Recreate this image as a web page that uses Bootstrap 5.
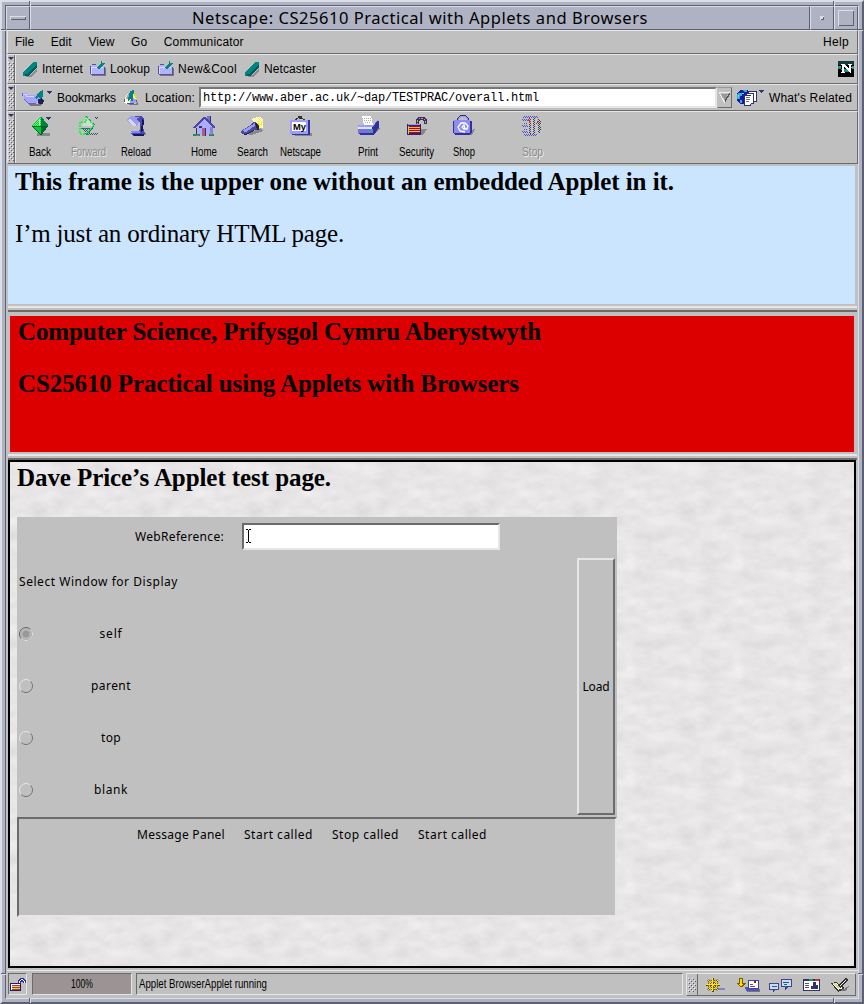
<!DOCTYPE html>
<html lang="en">
<head>
<meta charset="utf-8">
<title>Netscape: CS25610 Practical with Applets and Browsers</title>
<link href="https://cdn.jsdelivr.net/npm/bootstrap@5.3.0/dist/css/bootstrap.min.css" rel="stylesheet">
<style>
:root{--face:#c0c0c0;--hi:#e6e6e6;--lo:#6b6b6b;--frame:#aeb2c3;--fhi:#dcdee5;--flo:#5d6070}
*{border-radius:0!important}
body{margin:0;background:var(--frame);color:#000;font:12px/14px "Liberation Sans",Arial,sans-serif;width:864px;height:1004px;overflow:hidden}
[data-w]{display:inline-block;white-space:pre;flex:none}
.win{height:1004px;border:2px solid;border-color:var(--fhi) var(--flo) var(--flo) var(--fhi);padding:3px 3px 3px 3px}
.win-in{height:994px;width:854px;border:1px solid;border-color:var(--flo) var(--fhi) var(--fhi) var(--flo);background:var(--face);padding-left:1px}
.tick{position:absolute;background:var(--flo)}
.tick.v{width:2px;height:5px;border-right:1px solid var(--fhi)}
.tick.h{height:2px;width:5px;border-bottom:1px solid var(--fhi)}
.titlebar{height:24px;background:var(--frame);margin-left:-1px}
.tb{border:1px solid;border-color:var(--fhi) var(--flo) var(--flo) var(--fhi)}
.tb-side{width:24px}
.ttl{font:16.5px/21px "Noto Sans","Open Sans",sans-serif}
.bar{border:1px solid;border-color:var(--hi) var(--lo) var(--lo) var(--hi)}
.menu-row{height:24px;padding:0 8px 0 7px}
.menu-row .items{gap:16.7px}
.grip{width:7px;flex:none;border-right:1px solid var(--lo);padding:2px 0 2px 0}
.grip::before{content:"";display:block;border:3px solid transparent;border-top:3px solid #30306c;border-bottom:0;width:6px}
.grip::after,.dots{content:"";display:block;flex:1;margin-top:2px;background:url("data:image/svg+xml,%3Csvg xmlns='http://www.w3.org/2000/svg' width='4' height='4' shape-rendering='crispEdges'%3E%3Cpath d='M0 0h1v1H0zM2 2h1v1H2z' fill='%23eee'/%3E%3Cpath d='M1 1h1v1H1zM3 3h1v1H3z' fill='%2355557a'/%3E%3C/svg%3E")}
.tool{border-left:1px solid var(--hi);flex:1;min-width:0}
svg{display:block;flex:none;shape-rendering:crispEdges;overflow:visible}
.lbl{font:12.5px/14px "Liberation Sans",Arial,sans-serif}
.lbl[data-w],.lbl [data-w]{transform-origin:0 50%;text-align:left}
.url{width:518px;height:21px;margin-left:4px;background:#fff;border:2px solid;border-color:#777 var(--hi) var(--hi) #777;font:12px/18px "Liberation Mono",monospace;padding-left:2px}
.drop{width:15px;height:21px;border:1px solid;border-color:#999 var(--lo) var(--lo) var(--face)}
.navbtn{width:48px;padding-top:4px}
.navbtn svg{margin-bottom:5px}
.off{color:#8a8a8a;text-shadow:1px 1px #eee}
.doc{font:25px/26px "Liberation Serif","Times New Roman",serif}
.doc p{margin:0 0 26px;height:26px}
.f1{height:138px;background:#cbe5ff;margin:2px 3px 0 1px;padding:3px 7px}
.sash{height:6px;border-top:2px solid var(--hi);border-bottom:2px solid var(--lo);margin:2px 1px 0 1px}
.f2{height:136px;background:#d00;margin:4px 4px 0 3px;padding:3px 8px}
.f3{height:508px;border:2px solid #000;margin:0 2px 0 1px;padding:3px 7px;background:#e7e5e6 url("data:image/svg+xml,%3Csvg xmlns='http://www.w3.org/2000/svg' width='108' height='108'%3E%3Cfilter id='m' x='0' y='0' width='100%25' height='100%25' color-interpolation-filters='sRGB'%3E%3CfeTurbulence type='fractalNoise' baseFrequency='.046 .074' numOctaves='6' seed='8' stitchTiles='stitch'/%3E%3CfeColorMatrix values='.1 0 0 0 .856 .1 0 0 0 .849 .1 0 0 0 .852 0 0 0 0 1'/%3E%3C/filter%3E%3Crect width='108' height='108' filter='url(%23m)'/%3E%3C/svg%3E")}
.applet{width:600px;margin-top:2px;font:12px/16px "Noto Sans","Open Sans",sans-serif}
.applet svg{shape-rendering:auto}
.ap-top{height:300px;background:var(--face)}
.ap-field{height:27px;width:258px;background:#fff;border:2px solid;border-color:var(--lo) var(--hi) var(--hi) var(--lo);margin-left:18px;padding:4px 0 0 1px}
.ap-load{width:38px;height:257px;margin:0 2px 2px 0;border:2px solid;border-color:var(--hi) var(--lo) var(--lo) var(--hi)}
.ap-opt{height:52px}
.ap-opt .nm{width:152px}
.ap-msg{height:100px;background:var(--face);border:2px solid;border-color:var(--lo) var(--hi) var(--hi) var(--lo);padding:8px 0 0 118px;gap:19px}
.status{height:27px;margin-top:2px;padding:2px 2px 0 1px;border-top:1px solid var(--hi)}
.well{height:22px;border:1px solid;border-color:var(--lo) var(--hi) var(--hi) var(--lo)}
.pct{width:100px;background:#9c9494}
</style>
</head>
<body>
<svg width="0" height="0" class="position-absolute"><defs>
<pattern id="pg" width="2" height="2" patternUnits="userSpaceOnUse"><path fill="#0c3" d="M0 0h2v2H0z"/><path fill="#6f6" d="M0 0h1v1H0zM1 1h1v1H1z"/></pattern>
<pattern id="pd" width="2" height="2" patternUnits="userSpaceOnUse"><path fill="#316363" d="M0 0h1v1H0zM1 1h1v1H1z"/></pattern>
<pattern id="py" width="2" height="2" patternUnits="userSpaceOnUse"><path fill="#fff" d="M0 0h2v2H0z"/><path fill="#ffef63" d="M0 0h1v1H0zM1 1h1v1H1z"/></pattern>
<symbol id="mark" viewBox="0 0 16 16"><path fill="#8c8c8c" d="M4 14h4l7-7v3l-6 6H4z"/><path fill="#008484" d="M0 12L11 1h4v2L5 13H3v2H1v-3z"/><path fill="#005a5a" d="M3 13h2L15 3v3L6 15H3z"/></symbol>
<symbol id="fold" viewBox="0 0 16 16"><path fill="#777" d="M2 15h14V7h-1v7H2z"/><path fill="#b3b3f8" d="M0 5l2-2h3l2 2h7v9H0z"/><path fill="#dcdcff" d="M1 6h12v1H2v6H1z"/><path fill="#5252a5" d="M0 14h15V6h-1v7H0zM0 5h1v9H0zM2 3h4v1H2z"/><path fill="#008484" d="M7 6l4-4V0h1v2h4l-5 4-1 2H8z"/></symbol>
</defs></svg>

<div class="win">
<i class="tick v" style="left:29px;top:1px"></i><i class="tick v" style="left:833px;top:1px"></i>
<i class="tick h" style="left:1px;top:29px"></i><i class="tick h" style="left:858px;top:29px"></i>
<i class="tick h" style="left:1px;top:973px"></i><i class="tick h" style="left:858px;top:973px"></i>
<i class="tick v" style="left:29px;top:998px"></i><i class="tick v" style="left:833px;top:998px"></i>
<div class="win-in d-flex flex-column">

<div class="titlebar d-flex">
  <div class="tb tb-side d-flex align-items-center justify-content-center"><svg width="16" height="4"><path fill="#dcdee5" d="M0 0h16v1H1v3H0z"/><path fill="#5d6070" d="M16 1v3H1V3h14V1z"/></svg></div>
  <div class="tb flex-fill text-center ttl"><span data-w="456">Netscape: CS25610 Practical with Applets and Browsers</span></div>
  <div class="tb tb-side d-flex align-items-center justify-content-center"><svg width="4" height="4"><path fill="#dcdee5" d="M0 0h4v4H0z"/><path fill="#5d6070" d="M4 1v3H1V3h2V1z"/></svg></div>
  <div class="tb tb-side d-flex align-items-center justify-content-center"><svg width="16" height="16"><path fill="none" stroke="#dcdee5" d="M.5 16V.5H16"/><path fill="none" stroke="#5d6070" d="M1 15.500h14.500V1"/></svg></div>
</div>

<nav class="bar menu-row d-flex align-items-center justify-content-between">
  <div class="items d-flex"><span data-w="19">File</span><span data-w="21">Edit</span><span data-w="26">View</span><span data-w="16">Go</span><span data-w="80">Communicator</span></div>
  <span data-w="26">Help</span>
</nav>

<div class="bar d-flex" style="height:30px">
  <div class="grip d-flex flex-column"></div>
  <div class="tool d-flex align-items-center" style="padding:0 3px 0 6px">
    <svg width="16" height="16" class="me-1"><use href="#mark"/></svg><span data-w="41">Internet</span>
    <svg width="16" height="16" class="me-1" style="margin-left:7px"><use href="#fold"/></svg><span data-w="40">Lookup</span>
    <svg width="16" height="16" class="ms-2 me-1"><use href="#fold"/></svg><span data-w="59">New&amp;Cool</span>
    <svg width="16" height="16" class="me-1" style="margin-left:7px"><use href="#mark"/></svg><span data-w="52">Netcaster</span>
    <svg width="16" height="16" class="ms-auto"><path d="M0 0h16v16H0z"/><path fill="#183939" d="M0 0h16v4H0z"/><path fill="#218c8c" d="M0 5h3v4h2v2h7V8h4V5h-2v3H0z"/><path fill="#5aa5a5" d="M1 5h2v1H1zM13 6h2v1h-2z"/><path fill="#fff" d="M3 3h3l5 5V4h-1V3h4v1h-1v8h-1L6 6v5h1v1H3v-1h1V4H3z"/></svg>
  </div>
</div>

<div class="bar d-flex" style="height:27px">
  <div class="grip d-flex flex-column"></div>
  <div class="tool d-flex align-items-center">
    <svg width="30" height="16" class="me-1" style="margin-left:6px"><path fill="#777" d="M6 14h9l4-3 3 2-4 3H8z"/><path fill="#a5a5ff" d="M0 3h5v2h8l2-2h4v4l-3 3-2 4H6L2 10V6H0z"/><path fill="#d5d5ff" d="M1 4h4v2h7v1H4V5H1z"/><path fill="#6363ce" d="M0 3h1v3H0zM2 9l4 4h8v1H6l-4-4z"/><path fill="#21215a" d="M16 9h2V7l4 3-1 4h-4l-1-2z"/><path fill="#008484" d="M13 8l4-6 4-2v7l-3 2-1-3-3 3z"/><path fill="#30306c" d="M25 1h5v1h-1v1h-1v1h-1V3h-1V2h-1z"/></svg>
    <span data-w="59" style="margin-left:1px">Bookmarks</span>
    <svg width="16" height="16" style="margin:0 6px 0 7px"><path fill="#777" d="M5 14h8l2-3v4H6z"/><path fill="#ffff9c" d="M1 10l3-6 7-2 3 7-2 4-9 1z"/><path fill="#9c9cff" d="M9 7l5 3-3 4H6zM3 8l2-4 2 1-3 5z"/><path fill="#fff" d="M1 10l3 1 1 3-4-1z"/><path fill="#dede00" d="M11 3h1v2h1v3h1v2h-1V8h-1V6h-1z"/><path fill="#5252a5" d="M1 9h1v3H1zM4 13h7v1H4zM13 10h1v2h-1z"/><path fill="#008484" d="M7 1l4-1-1 8v3H8V9l-3 2V9z"/></svg>
    <span data-w="50">Location:</span>
    <div class="url"><span data-w="336">http://www.aber.ac.uk/~dap/TESTPRAC/overall.html</span></div>
    <div class="drop"><svg width="14" height="19"><path fill="#eee" d="M1 4h11v1H2l5 9v1H6L1 5z"/><path fill="#999" d="M3 6h7l-3 7z"/><path fill="#555" d="M12 4v2l-5 9V12l4-7z"/></svg></div>
    <svg width="28" height="17" style="margin-left:4px;margin-right:5px"><circle cx="8" cy="8" r="7.500" fill="#1818a5"/><path fill="#29b5ce" d="M2 4h4v3H4v3H1V6zM7 1h4v2H8zM4 11h2v3H4z"/><path fill="#72dada" d="M6 4h2v1H6zM2 6h1v2H2z"/><path fill="#30306c" d="M12 2h9v11h-3v2h-3v2H8V6h2V4h2z"/><path fill="#fff" d="M13 3h7v9h-2V4h-5zM11 5h6v9h-2V6h-4zM9 7h6v7l-2 2H9z"/><path fill="none" stroke="#777" d="M10 8.500h4M10 10.500h4M10 12.500h3"/><path fill="#30306c" d="M23 1h5v1h-1v1h-1v1h-1V3h-1V2h-1z"/></svg>
    <span data-w="83">What's Related</span>
  </div>
</div>

<div class="bar d-flex" style="height:53px">
  <div class="grip d-flex flex-column"></div>
  <div class="tool d-flex">
    <div class="navbtn text-center"><svg width="24" height="24" class="mx-auto"><path fill="#888" d="M9 17h13v3H9z"/><path fill="url(#pg)" d="M4 10L13 0v20z"/><path fill="#00843a" d="M13 0l7 9-7 11z"/><path fill="#006331" d="M4 10h16l-7 10z"/><path fill="#0c3" d="M5 11h8v8z"/><path fill="#cfc" d="M11 3h1v6h-1z"/><path fill="#30306c" d="M18 1h5v1h-1v1h-1v1h-1V3h-1V2h-1z"/></svg><span class="lbl" data-w="22">Back</span></div>
    <div class="navbtn text-center"><svg width="24" height="24" class="mx-auto"><path fill="url(#pd)" d="M7 17h15v2H10zM5 12h13l-6 7z"/><path fill="#cfdccf" d="M10 1l8 9H6z"/><path fill="none" stroke="#31ef4a" stroke-width="1.500" stroke-dasharray="2 1" d="M10 0v6H4v12h5l9-8z"/><path fill="none" stroke="#00946b" stroke-dasharray="1 1" d="M10 0l9 9-8 10M5 12h12"/><path fill="none" stroke="#30306c" stroke-dasharray="1 1" d="M19 1.500h4M20 2.500h2"/></svg><span class="lbl off" data-w="35">Forward</span></div>
    <div class="navbtn text-center"><svg width="24" height="24" class="mx-auto"><path fill="#888" d="M16 14l7 4-4 2h-9z"/><path fill="#4a4ab5" d="M7 0h10l3 3-1 9 2 5-3 3H9l-3-3h8l2-4V6H11z"/><path fill="#9c9cef" d="M2 4l4-4 10 1-4 2 3 3-2 4h-3z"/><path fill="#d8d8f4" d="M3 4l3-1 7 6-3 1z"/><path fill="#18185a" d="M18 3l2 2-1 9-2 3zM8 18h12v2H11z"/><path fill="#8484ff" d="M6 15h10v2H8z"/></svg><span class="lbl" data-w="30">Reload</span></div>
    <div class="navbtn text-center" style="margin-left:20px"><svg width="24" height="24" class="mx-auto"><path fill="#7373ce" d="M15 0h4v8h-4z"/><path fill="#31316b" d="M18 0h1v8h-1z"/><path fill="#adadff" d="M12 2l8 8v9H4v-8z"/><path fill="#4a4aa5" d="M11 1h2l10 10v1h-2l-9-9-9 9H1v-1z"/><path fill="#8484d6" d="M18 11h3v8h-3z"/><path fill="#b55a84" d="M10 12h4v8h-4z"/><path fill="#31316b" d="M13 12h1v8h-1zM7 10h3v2H7zM4 12h1v7H4z"/><path fill="#00946b" d="M1 18h7v2H1zM17 18h5v2h-5z"/><path fill="#c63" d="M4 19h3v1H4zM18 18h2v1h-2z"/></svg><span class="lbl" data-w="26">Home</span></div>
    <div class="navbtn text-center"><svg width="24" height="24" class="mx-auto"><path fill="#888" d="M6 18l15-6 2 3-11 4z"/><path fill="url(#py)" d="M12 3l5-2h4l2 3v8h-6z"/><path fill="#fe0" d="M18 5h1v3h2V6h1v3h-2v2h-3z"/><path fill="#4a4a9c" d="M1 15l10-6 2-3h3l3 4v4h-4l-9 4H2z"/><path fill="#9c9cef" d="M2 15l10-6 2-2 2 2-10 7z"/><path fill="#21215a" d="M15 7h2l2 4v3h-2zM2 18h4l8-4v1l-8 4z"/></svg><span class="lbl" data-w="31">Search</span></div>
    <div class="navbtn text-center"><svg width="24" height="24" class="mx-auto"><path fill="#888" d="M5 17h19v3H7z"/><path fill="#31319c" d="M2 4h20v15H4z"/><path fill="#9c9cff" d="M2 4h18v14H2z"/><path fill="#fff" d="M4 6h14v9H4z"/><path fill="none" stroke="#333" d="M7 4l5-3 5 3M9.500.5h4v2h-3"/><text x="5" y="14" style="font:bold 9px 'Liberation Sans'" textLength="13" lengthAdjust="spacingAndGlyphs">My</text></svg><span class="lbl" data-w="41">Netscape</span></div>
    <div class="navbtn text-center" style="margin-left:20px"><svg width="24" height="24" class="mx-auto"><path fill="#777" d="M8 18l13-8 3 2-5 6z"/><path fill="#9c9cff" d="M2 9h16l3-5 2 1-4 9-2 4H2z"/><path fill="#31319c" d="M16 12l6-8 1 2v5l-5 8H4l-2-2h14z"/><path fill="#fff" d="M6 0h9l2 9H8z"/><path fill="none" stroke="#aaa" stroke-dasharray="1 1" d="M8 2.500h7M8 4.500h7M9 6.500h6"/><path fill="#e0e0ff" d="M2 11h14v2H2z"/><path fill="#7373e0" d="M2 13h15v4H2z"/><path fill="#00ce63" d="M12 15h3v1h-3z"/></svg><span class="lbl" data-w="20">Print</span></div>
    <div class="navbtn text-center"><svg width="24" height="24" class="mx-auto"><path fill="#888" d="M15 13h8l-4 6h-3z"/><path fill="none" stroke="#31316b" stroke-width="3" d="M13.500 9V4.500l2-2h4l2 2V8"/><path fill="none" stroke="#e0a530" stroke-dasharray="2 1" d="M13.500 9V4.500l2-2h4l2 2V8"/><path fill="#31216b" d="M3 8h14v11H3z"/><path fill="#b5003a" d="M5 10h11v7H5z"/><path fill="none" stroke="#dec542" d="M5 11.500h11M5 13.500h11M5 15.500h11M4.500 10v8"/><path fill="#9c9cff" d="M4 8h12v1H4z"/></svg><span class="lbl" data-w="35">Security</span></div>
    <div class="navbtn text-center"><svg width="24" height="24" class="mx-auto"><path fill="#888" d="M8 17l15-4-3 6H9z"/><path fill="none" stroke="#31316b" stroke-width="2" d="M6 7V3l3-3h4l3 3v4"/><path fill="none" stroke="#9c9cff" d="M6.500 7V3l3-3h3l3 3v3"/><path fill="#31319c" d="M1 5h19v12l-3 2H3l-2-2z"/><path fill="#8c8cf7" d="M2 4h16v13H2z"/><path fill="none" stroke="#fff" stroke-width="1.300" shape-rendering="auto" d="M13 16l-5-1-2-4 3-4h4l3 3-1 3h-3l-2-2 2-2 1 4"/></svg><span class="lbl" data-w="22">Shop</span></div>
    <div class="navbtn text-center" style="margin-left:20px"><svg width="24" height="24" class="mx-auto"><path fill="none" stroke="#5252d5" stroke-dasharray="1 1" d="M4 .5h14M3 1.500h16M2 3.500h6M3 4.500h5M4 7.500h4M2 9.500h6M3 10.500h5M4 13.500h4M2 15.500h6M3 16.500h5M4 18.500h14M5 19.500h12"/><path fill="none" stroke="#444" stroke-dasharray="1 1" d="M9.500 2v16M10.500 3v16M13.500 3v16M14.500 2v16M18.500 3v14M19.500 4v14M20.500 5v3M20.500 11v3"/><path fill="none" stroke="#c8c8ff" stroke-dasharray="1 1" d="M8.500 3v14M12.500 2v15M16.500 3v14"/><path fill="#d42a2a" d="M8 3h1v1h1v1h1v1h-1v1H9V5H8zM17 5h1v2h-1zM16 7h1v1h-1z"/></svg><span class="lbl off" data-w="21">Stop</span></div>
  </div>
</div>

<section class="doc f1"><p><b data-w="659">This frame is the upper one without an embedded Applet in it.</b></p><p><span data-w="329">I’m just an ordinary HTML page.</span></p></section>
<div class="sash"></div>
<section class="doc f2"><p><b data-w="523">Computer Science, Prifysgol Cymru Aberystwyth</b></p><p><b data-w="501">CS25610 Practical using Applets with Browsers</b></p></section>
<div class="sash"></div>
<section class="doc f3"><p><b data-w="314">Dave Price’s Applet test page.</b></p>
  <div class="applet">
    <div class="ap-top d-flex justify-content-between">
      <div class="flex-fill">
        <div class="d-flex align-items-center" style="height:39px;padding-left:118px"><span data-w="89">WebReference:</span><div class="ap-field"><svg width="7" height="14"><path fill="none" stroke="#000" d="M1 .5h2M4 .5h2M3.500 1v12M1 13.500h2M4 13.500h2"/></svg></div></div>
        <div class="ap-opt d-flex align-items-center ps-0"><span data-w="159" style="margin-left:2px">Select Window for Display</span></div>
        <div class="ap-opt d-flex align-items-center"><svg width="18" height="16"><circle cx="9" cy="8" r="6.500" fill="#b8b8b8" stroke="#666"/><path d="M13.600 3.400a6.500 6.500 0 0 1-9.200 9.200" fill="none" stroke="#eee"/><circle cx="9" cy="8" r="3.500" fill="#999"/></svg><div class="nm text-center"><span data-w="23">self</span></div></div>
        <div class="ap-opt d-flex align-items-center"><svg width="18" height="16"><circle cx="9" cy="8" r="6.500" fill="none" stroke="#e6e6e6"/><path d="M13.600 3.400a6.500 6.500 0 0 1-9.200 9.200" fill="none" stroke="#666"/></svg><div class="nm text-center"><span data-w="40">parent</span></div></div>
        <div class="ap-opt d-flex align-items-center"><svg width="18" height="16"><circle cx="9" cy="8" r="6.500" fill="none" stroke="#e6e6e6"/><path d="M13.600 3.400a6.500 6.500 0 0 1-9.200 9.200" fill="none" stroke="#666"/></svg><div class="nm text-center"><span data-w="20">top</span></div></div>
        <div class="ap-opt d-flex align-items-center"><svg width="18" height="16"><circle cx="9" cy="8" r="6.500" fill="none" stroke="#e6e6e6"/><path d="M13.600 3.400a6.500 6.500 0 0 1-9.200 9.200" fill="none" stroke="#666"/></svg><div class="nm text-center"><span data-w="34">blank</span></div></div>
      </div>
      <div class="ap-load d-flex align-items-center justify-content-center align-self-end"><span data-w="27">Load</span></div>
    </div>
    <div class="ap-msg d-flex align-items-start"><span data-w="88">Message Panel</span><span data-w="69">Start called</span><span data-w="67">Stop called</span><span data-w="69">Start called</span></div>
  </div>
</section>

<footer class="status d-flex lbl">
  <div class="well d-flex align-items-center justify-content-center" style="width:19px"><svg width="15" height="13"><path fill="none" stroke="#31319c" stroke-width="3" d="M9.500 6V3.500l2-2h1l2 2V5"/><path fill="none" stroke="#fff" d="M9.500 6V3.500l2-2h1l2 2V5"/><path fill="#21215a" d="M0 5h11v8H0z"/><path fill="#ad314a" d="M2 7h8v5H2z"/><path fill="none" stroke="#e7d652" d="M2 8.500h8M2 10.500h8"/><path fill="#fff" d="M1 6h9v1H2v5H1z"/></svg></div>
  <div class="well pct d-flex align-items-center justify-content-center" style="margin-left:5px"><span data-w="22">100%</span></div>
  <div class="well d-flex align-items-center flex-fill" style="margin:0 3px 0 4px;padding-left:2px"><span data-w="128">Applet BrowserApplet running</span></div>
  <div class="bar d-flex" style="width:170px;height:23px">
    <div class="dots" style="margin:4px 1px 3px;flex:0 0 8px"></div>
    <div class="d-flex align-items-center justify-content-between flex-fill" style="border-left:1px solid #6b6b6b;padding:0 5px 0 7px">
      <svg width="21" height="14"><path fill="#8484ce" d="M9 10h11v2H9z"/><g shape-rendering="auto" fill="none" stroke="#5a4a00" stroke-width="2"><circle cx="8" cy="7" r="4"/><path d="M1 7h14M8 0v14M3 2l10 10M13 2L3 12"/></g><g shape-rendering="auto" fill="none" stroke="#ffde31"><circle cx="8" cy="7" r="4"/><path d="M1 6.500h14M7.500 0v13M3 2l10 10M13 2L3 12"/></g></svg>
      <svg width="22" height="14"><path fill="#777" d="M10 11h13v3H10z"/><path fill="#5252b5" d="M8 9h14v4H9z"/><path fill="#4242a5" d="M11 2h11v9H11z"/><path fill="#fff" d="M12 3h9v7h-9z"/><path fill="#b5003a" d="M17 3h2v2h-2z"/><path fill="#5252a5" d="M13 6h3v1h-3zM13 8h5v1h-5z"/><path fill="#7b5a00" d="M2 0h4v5h3v1L5 9H4L0 6V5h2z"/><path fill="#ffd600" d="M3 1h2v5h2L4 8 1 6h2z"/></svg>
      <svg width="23" height="14"><path fill="#42429c" d="M0 5h10v7H7l-3 2v-2H0zM12 1h11v8h-4l-3 3V9h-4z"/><path fill="#cfd9ec" d="M1 6h8v5H1zM13 2h9v6h-9z"/><path fill="none" stroke="#007373" d="M3 8.500h5M14 4.500h6M15 6.500h3"/></svg>
      <svg width="17" height="13"><path fill="#31316b" d="M0 1h17v12H0z"/><path fill="#fff" d="M1 3h15v9H1z"/><path fill="#31316b" d="M10 4h3v3h2v4H8V8h2z"/><path fill="#00a552" d="M6 1h4v2H6z"/><path fill="#de2929" d="M12 1h4v2h-4z"/><path fill="#555" d="M2 5h4v1H2zM2 7h4v1H2zM2 9h4v1H2z"/></svg>
      <svg width="20" height="14"><path fill="#777" d="M5 11h9l5-3-3 5H7z"/><path fill="#333" d="M1 5l5-1 9 6-7 4z"/><path fill="#fff" d="M2 6l4-1 7 5-5 2z"/><path fill="#dede84" d="M2 5h3l5 5-2 1z"/><path fill="none" stroke="#333" stroke-width="3" d="M9 9l8-8"/><path fill="none" stroke="#eee" d="M10 8l6-6"/></svg>
    </div>
  </div>
</footer>

</div>
</div>
<script src="https://cdn.jsdelivr.net/npm/bootstrap@5.3.0/dist/js/bootstrap.bundle.min.js"></script>
<script>
// Fit each label to the width given in data-w: button and status captions are
// condensed, everything else is tracked.
document.querySelectorAll('[data-w]').forEach(function (el) {
  var w = +el.dataset.w, n = el.textContent.length, now = el.getBoundingClientRect().width;
  if (el.closest('.lbl')) {
    el.style.width = w + 'px';
    el.style.transform = 'scaleX(' + (w / now).toFixed(4) + ')';
  } else {
    el.style.letterSpacing = ((w - now) / n).toFixed(3) + 'px';
  }
});
</script>
</body>
</html>
